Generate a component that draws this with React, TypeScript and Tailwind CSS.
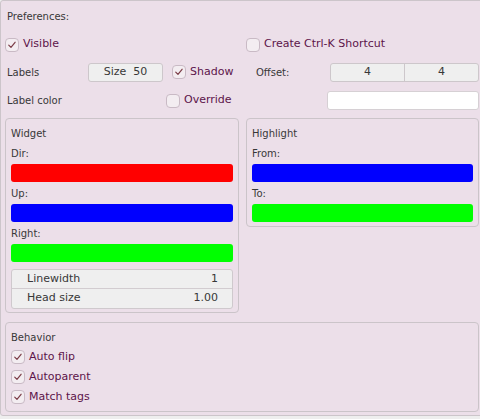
import type { ReactNode } from "react";

function Check({ checked, label }: { checked?: boolean; label: string }) {
  return (
    <div className="flex items-center">
      <span className="flex size-[14px] shrink-0 items-center justify-center rounded-[4px] border border-[#c9bac5] bg-[#f3edf1]">
        {checked ? (
          <svg viewBox="0 0 14 14" className="size-[12px]" aria-hidden="true">
            <polyline
              points="3.2,7.2 5.8,9.8 10.6,3.8"
              fill="none"
              stroke="#7b3c46"
              strokeWidth="1.4"
              strokeLinecap="round"
              strokeLinejoin="round"
            />
          </svg>
        ) : null}
      </span>
      <span className="ml-[4px] text-[11px] text-[#5c1449]">{label}</span>
    </div>
  );
}

function Group({ title, children }: { title: string; children: ReactNode }) {
  return (
    <section className="rounded-[4px] border border-[#cbc4c9] px-[5px] pt-[5px]">
      <div className="flex h-[18px] items-center text-[10px] text-[#383838]">{title}</div>
      {children}
    </section>
  );
}

function Swatch({ label, color }: { label: string; color: string }) {
  return (
    <div>
      <div className="flex h-[22px] items-center text-[10px] text-[#383838]">{label}</div>
      <div className={`h-[18px] rounded-[3px] ${color}`} />
    </div>
  );
}

function TableRow({ label, value, last }: { label: string; value: string; last?: boolean }) {
  return (
    <div
      className={`flex items-center justify-between pl-[15px] pr-[14px] text-[11px] text-[#383838] ${
        last ? "h-[19px]" : "h-[19px] border-b border-[#d2ccd0]"
      }`}
    >
      <span>{label}</span>
      <span>{value}</span>
    </div>
  );
}

export default function App() {
  return (
    <div className="h-[419px] w-[480px] overflow-hidden bg-[#eeeeee] font-['DejaVu_Sans',sans-serif]">
      <div className="w-[484px] rounded-[3px] border border-[#ccc5ca] bg-[#ecdfe9] px-[4px] pb-[3px]">
        <div className="flex h-[30px] items-center pl-[2px] text-[10px] text-[#383838]">Preferences:</div>

        <div className="grid h-[27px] grid-cols-[241px_1fr] items-center">
          <Check checked label="Visible" />
          <Check label="Create Ctrl-K Shortcut" />
        </div>

        <div className="grid h-[28px] grid-cols-[241px_1fr] items-center">
          <div className="flex items-center">
            <span className="w-[83px] pl-[2px] text-[10px] text-[#383838]">Labels</span>
            <button className="flex h-[19px] w-[75px] items-center justify-center whitespace-pre rounded-[3px] border border-[#cdc7cb] bg-[#efefef] text-[11px] text-[#383838]">
              {"Size  50"}
            </button>
            <div className="ml-[9px]">
              <Check checked label="Shadow" />
            </div>
          </div>
          <div className="flex items-center">
            <span className="w-[84px] pl-[10px] text-[10px] text-[#383838]">Offset:</span>
            <div className="flex h-[19px] flex-1 rounded-[3px] border border-[#cdc7cb] bg-[#efefef] text-[11px] text-[#383838]">
              <span className="flex flex-1 items-center justify-center border-r border-[#cdc7cb]">4</span>
              <span className="flex flex-1 items-center justify-center">4</span>
            </div>
          </div>
        </div>

        <div className="grid h-[29px] grid-cols-[241px_1fr] items-center">
          <div className="flex items-center">
            <span className="w-[161px] pl-[2px] text-[10px] text-[#383838]">Label color</span>
            <Check label="Override" />
          </div>
          <div className="pl-[81px]">
            <div className="h-[19px] rounded-[3px] border border-[#d6d0d4] bg-white" />
          </div>
        </div>

        <div className="mt-[3px] grid grid-cols-[234px_1fr] items-start gap-[7px]">
          <Group title="Widget">
            <Swatch label="Dir:" color="bg-[#ff0000]" />
            <Swatch label="Up:" color="bg-[#0000ff]" />
            <Swatch label="Right:" color="bg-[#00ff00]" />
            <div className="mt-[7px] mb-[3px] rounded-[3px] border border-[#cfc9cd] bg-[#efefef]">
              <TableRow label="Linewidth" value="1" />
              <TableRow label="Head size" value="1.00" last />
            </div>
          </Group>
          <Group title="Highlight">
            <Swatch label="From:" color="bg-[#0000ff]" />
            <div className="pb-[4px]">
              <Swatch label="To:" color="bg-[#00ff00]" />
            </div>
          </Group>
        </div>

        <section className="mt-[9px] rounded-[4px] border border-[#cbc4c9] px-[5px] pt-[4px] pb-[4px]">
          <div className="flex h-[20px] items-center text-[10px] text-[#383838]">Behavior</div>
          <div className="flex h-[20px] items-center">
            <Check checked label="Auto flip" />
          </div>
          <div className="flex h-[20px] items-center">
            <Check checked label="Autoparent" />
          </div>
          <div className="flex h-[20px] items-center">
            <Check checked label="Match tags" />
          </div>
        </section>
      </div>
    </div>
  );
}
